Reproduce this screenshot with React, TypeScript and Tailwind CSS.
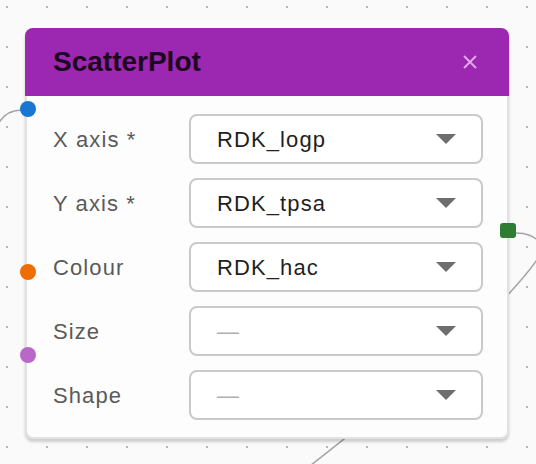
const fields = [
  { label: "X axis *", value: "RDK_logp" },
  { label: "Y axis *", value: "RDK_tpsa" },
  { label: "Colour", value: "RDK_hac" },
  { label: "Size", value: "" },
  { label: "Shape", value: "" },
];

const Caret = () => (
  <svg width="20" height="10" viewBox="0 0 20 10" className="shrink-0">
    <path d="M0 0 L20 0 L10 10 Z" fill="#6e6e6e" />
  </svg>
);

const Field = ({ value }: { value: string }) => (
  <div className="h-[50px] flex items-center justify-between rounded-lg border-2 border-[#c9c9c9] bg-white pl-[26px] pr-[25px]">
    {value ? (
      <span className="text-[22px] tracking-[0.05em] text-[#1f1f1f]">{value}</span>
    ) : (
      <span className="text-[22px] text-[#b0b0b0]">—</span>
    )}
    <Caret />
  </div>
);

const App = () => {
  return (
    <div className="relative w-[536px] h-[464px] overflow-hidden bg-[#fafafa] bg-[radial-gradient(circle,#b5b5b5_1px,transparent_1.5px)] bg-[size:40px_40px] bg-[position:-13px_-13px] font-['Liberation_Sans',Arial,sans-serif]">
      {/* edges */}
      <svg className="absolute inset-0" width="536" height="464" viewBox="0 0 536 464" fill="none">
        <path d="M22 110 Q6 110 -2 124" stroke="#a3a3a3" strokeWidth="1.5" />
        <path d="M516 233 C527 233 533 236 540 242" stroke="#a3a3a3" strokeWidth="1.5" />
        <path d="M306 469 Q495 322 539 257" stroke="#a3a3a3" strokeWidth="1.5" />
      </svg>

      {/* node */}
      <div className="absolute left-[25px] top-[28px] w-[484px] rounded-lg border-2 border-[#e2e2e2] bg-[#fdfdfd] shadow-[0_3px_3px_rgba(0,0,0,0.18)]">
        <div className="-mx-[2px] -mt-[2px] h-[68px] rounded-t-lg bg-[#9c27b0] flex items-center justify-between pl-[28px] pr-[32px]">
          <span className="text-[28px] font-bold text-[#1c0820]">ScatterPlot</span>
          <svg width="14" height="14" viewBox="0 0 14 14">
            <path d="M1 1 L13 13 M13 1 L1 13" stroke="#e3a6ec" strokeWidth="2" />
          </svg>
        </div>

        <div className="flex flex-col gap-[14px] pt-[18px] pb-[17px] pl-[26px] pr-[24px]">
          {fields.map((f) => (
            <div key={f.label} className="grid grid-cols-[136px_1fr] items-center">
              <span className="text-[22px] tracking-[0.05em] text-[#5a5a5a]">{f.label}</span>
              <Field value={f.value} />
            </div>
          ))}
        </div>

        {/* handles */}
        <span className="absolute left-[-7px] top-[71px] w-4 h-4 rounded-full bg-[#1976d2]" />
        <span className="absolute left-[-7px] top-[234px] w-4 h-4 rounded-full bg-[#ef6c00]" />
        <span className="absolute left-[-7px] top-[317px] w-4 h-4 rounded-full bg-[#ba68c8]" />
        <span className="absolute right-[-9px] top-[193px] w-4 h-[15px] rounded-[3px] bg-[#2e7d32]" />
      </div>
    </div>
  );
};

export default App;
